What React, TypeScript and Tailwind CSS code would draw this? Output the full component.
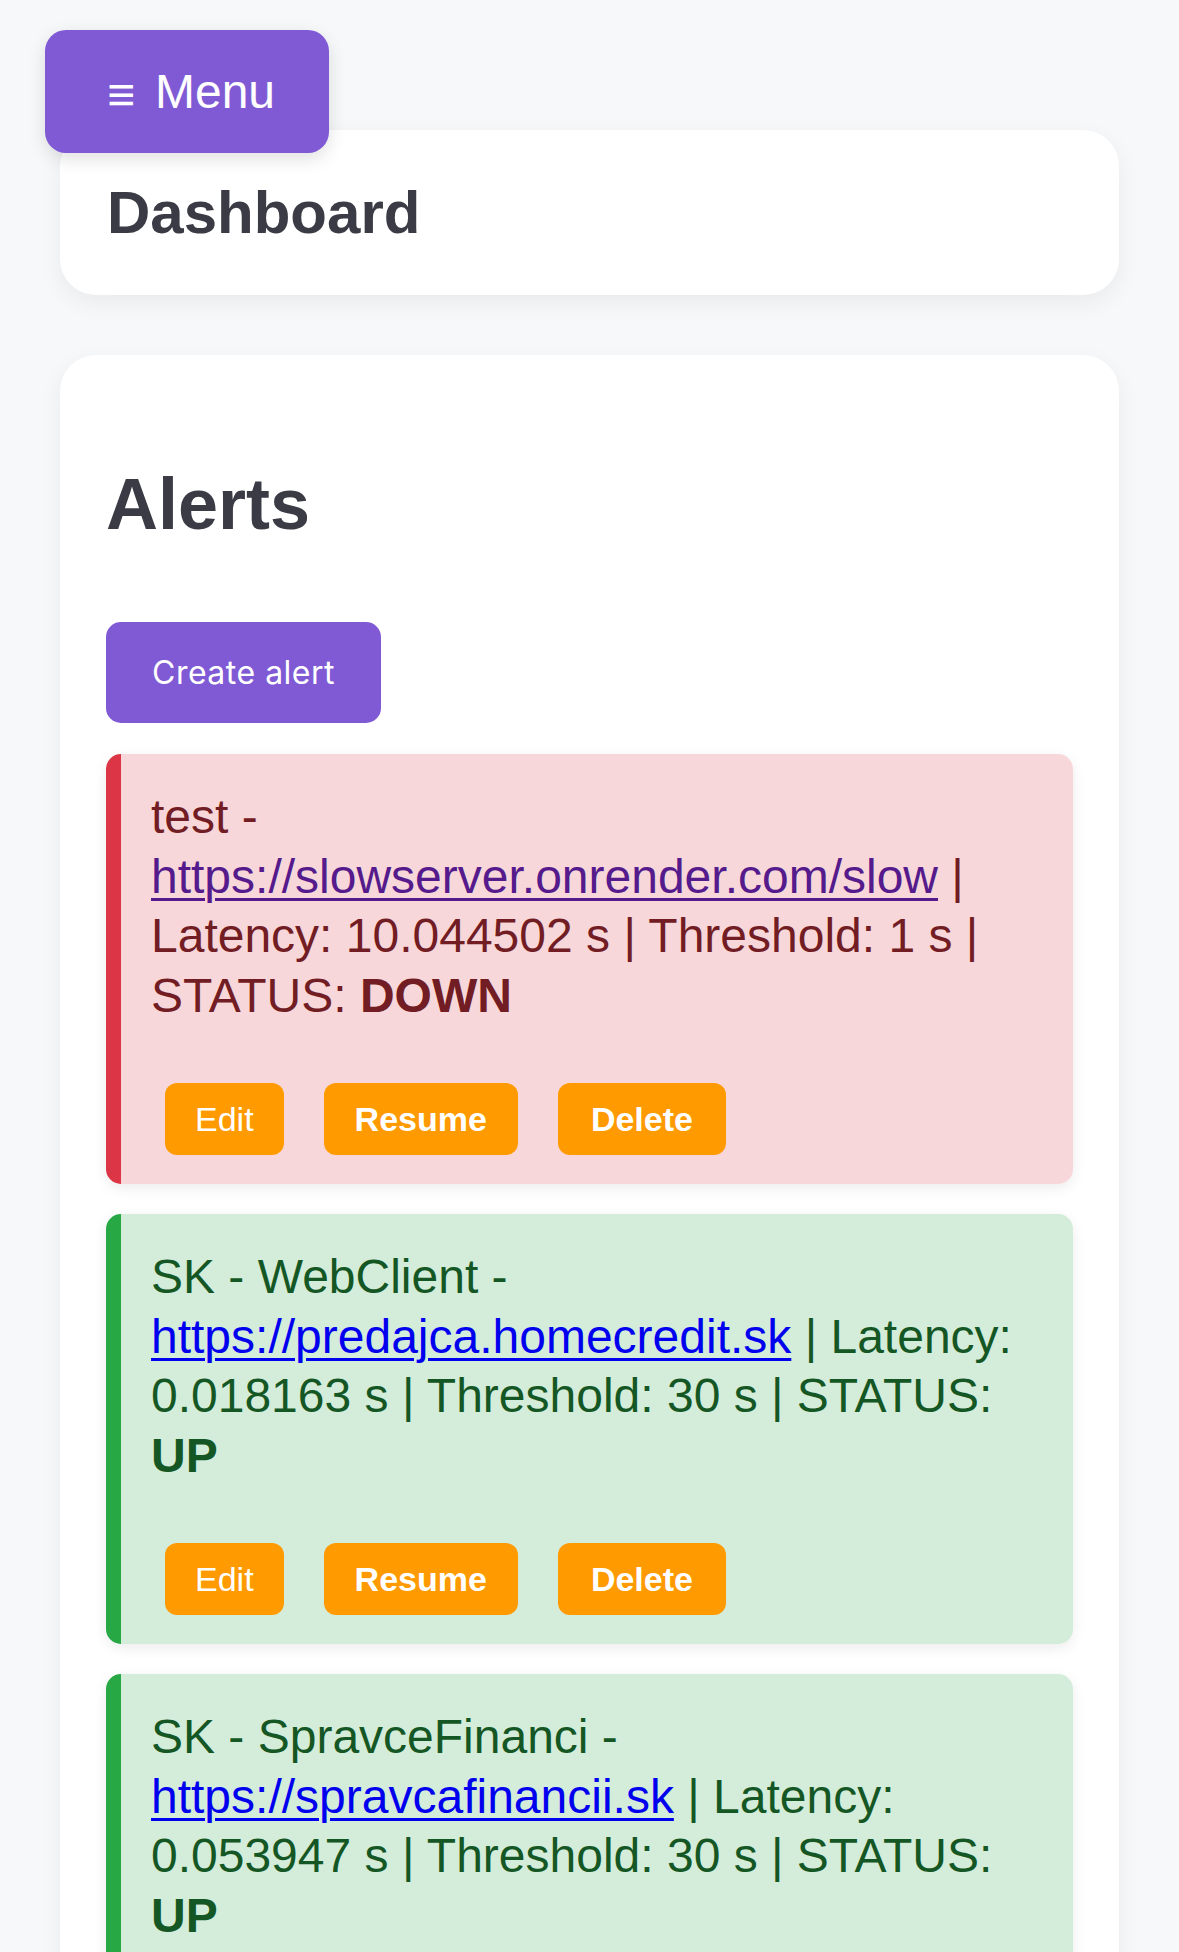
import React from "react";

type Alert = {
  name: string;
  url: string;
  latency: string;
  threshold: string;
  status: "UP" | "DOWN";
  visited?: boolean;
};

const alerts: Alert[] = [
  {
    name: "test",
    url: "https://slowserver.onrender.com/slow",
    latency: "10.044502",
    threshold: "1",
    status: "DOWN",
    visited: true,
  },
  {
    name: "SK - WebClient",
    url: "https://predajca.homecredit.sk",
    latency: "0.018163",
    threshold: "30",
    status: "UP",
  },
  {
    name: "SK - SpravceFinanci",
    url: "https://spravcafinancii.sk",
    latency: "0.053947",
    threshold: "30",
    status: "UP",
  },
];

function AlertCard({ a }: { a: Alert }) {
  const down = a.status === "DOWN";
  return (
    <div
      className={
        down
          ? "rounded-[15px] border-l-[15px] border-[#dc3545] bg-[#f8d7da] text-[#721c24] pl-[30px] pr-[30px] pt-[33px] pb-[29px] shadow-[0_4px_14px_rgba(0,0,0,0.08)]"
          : "rounded-[15px] border-l-[15px] border-[#28a745] bg-[#d4edda] text-[#155724] pl-[30px] pr-[30px] pt-[33px] pb-[29px] shadow-[0_4px_14px_rgba(0,0,0,0.08)]"
      }
    >
      <p className="text-[48px] leading-[59.5px]">
        {a.name} -{" "}
        <a
          href="#"
          className={
            a.visited
              ? "text-[#551a8b] underline decoration-[3px] underline-offset-[5px]"
              : "text-[#0000ee] underline decoration-[3px] underline-offset-[5px]"
          }
        >
          {a.url}
        </a>{" "}
        | Latency: {a.latency} s | Threshold: {a.threshold} s | STATUS:{" "}
        <b className="font-bold">{a.status}</b>
      </p>
      <div className="mt-[58px] ml-[14px] flex gap-[40px]">
        <button className="h-[72px] px-[30px] rounded-[12px] bg-[#ff9a00] text-white text-[34px] font-normal leading-none">
          Edit
        </button>
        <button className="h-[72px] px-[31px] rounded-[12px] bg-[#ff9a00] text-white text-[34px] font-bold leading-none">
          Resume
        </button>
        <button className="h-[72px] px-[33px] rounded-[12px] bg-[#ff9a00] text-white text-[34px] font-bold leading-none">
          Delete
        </button>
      </div>
    </div>
  );
}

export default function App() {
  return (
    <div className="relative min-h-screen w-full bg-[#f7f8fa] font-['Liberation_Sans',Arial,sans-serif] pb-[60px]">
      <button className="absolute left-[45px] top-[30px] z-10 flex h-[123px] w-[284px] items-center justify-center gap-[20px] rounded-[21px] bg-[#805ad5] pl-[8px] text-[48px] text-white shadow-[0_6px_18px_rgba(0,0,0,0.12)]">
        <span className="text-[48px] leading-none translate-y-[3px]">≡</span>
        <span className="leading-none">Menu</span>
      </button>
      <div className="px-[60px] pt-[130px] w-[1179px]">
        <div className="flex h-[165px] items-center rounded-[36px] bg-white px-[47px] shadow-[0_8px_24px_rgba(0,0,0,0.06)]">
          <h1 className="text-[60px] font-bold leading-[70px] text-[#3b3b45]">Dashboard</h1>
        </div>
        <div className="mt-[60px] rounded-[36px] bg-white px-[46px] pt-[46px] pb-[46px] shadow-[0_8px_24px_rgba(0,0,0,0.06)]">
          <h2 className="mt-[60px] text-[72px] font-bold leading-[86px] text-[#3b3b45]">Alerts</h2>
          <button className="mt-[75px] flex h-[101px] items-center rounded-[15px] bg-[#805ad5] px-[46px] font-['Inter',sans-serif] text-[32px] tracking-[0.5px] text-white">
            Create alert
          </button>
          <div className="mt-[31px] flex flex-col gap-[30px]">
            {alerts.map((a, i) => (
              <AlertCard key={i} a={a} />
            ))}
          </div>
        </div>
      </div>
    </div>
  );
}
